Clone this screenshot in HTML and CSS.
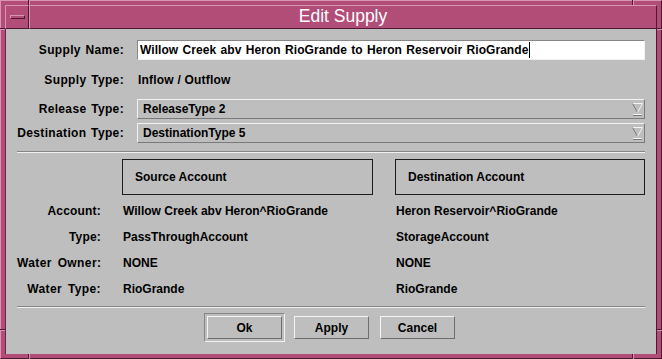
FILE: index.html
```html
<!DOCTYPE html>
<html>
<head>
<meta charset="utf-8">
<title>Edit Supply</title>
<link rel="stylesheet" href="styles.css">
</head>
<body>
<div class="frame">
  <span class="notch nv n-top-l"></span>
  <span class="notch nv n-top-r"></span>
  <span class="notch nv n-bot-l"></span>
  <span class="notch nv n-bot-r"></span>
  <span class="notch nh n-left-t"></span>
  <span class="notch nh n-left-b"></span>
  <span class="notch nh n-right-t"></span>
  <span class="notch nh n-right-b"></span>

  <div class="titlebar">
    <div class="menubtn"><span class="menubar"></span></div>
    <div class="title">Edit Supply</div>
  </div>

  <div class="content">
    <div class="form">
      <div class="lbl">Supply Name:</div>
      <div class="input">Willow Creek abv Heron RioGrande to Heron Reservoir RioGrande<span class="caret"></span></div>

      <div class="lbl">Supply Type:</div>
      <div class="val">Inflow / Outflow</div>

      <div class="lbl">Release Type:</div>
      <div class="combo">
        <span class="combo-text">ReleaseType 2</span>
        <svg class="arrow" width="11" height="15" viewBox="0 0 11 15">
          <path d="M0.5 1.5 H10.5" stroke="#f4f4f4" stroke-width="1"/>
          <path d="M0.5 1.5 L5.5 10.5" stroke="#7a7a7a" stroke-width="1" fill="none"/>
          <path d="M10.5 1.5 L5.5 10.5" stroke="#f4f4f4" stroke-width="1" fill="none"/>
          <path d="M1 12.5 H10" stroke="#f4f4f4" stroke-width="1"/>
          <path d="M1 13.5 H10" stroke="#7a7a7a" stroke-width="1"/>
        </svg>
      </div>

      <div class="lbl">Destination Type:</div>
      <div class="combo">
        <span class="combo-text">DestinationType 5</span>
        <svg class="arrow" width="11" height="15" viewBox="0 0 11 15">
          <path d="M0.5 1.5 H10.5" stroke="#f4f4f4" stroke-width="1"/>
          <path d="M0.5 1.5 L5.5 10.5" stroke="#7a7a7a" stroke-width="1" fill="none"/>
          <path d="M10.5 1.5 L5.5 10.5" stroke="#f4f4f4" stroke-width="1" fill="none"/>
          <path d="M1 12.5 H10" stroke="#f4f4f4" stroke-width="1"/>
          <path d="M1 13.5 H10" stroke="#7a7a7a" stroke-width="1"/>
        </svg>
      </div>
    </div>

    <div class="sep sep-1"></div>

    <div class="accounts">
      <div class="blank"></div>
      <div class="hdr">Source Account</div>
      <div class="hdr hdr-d">Destination Account</div>

      <div class="lbl lbl2">Account:</div>
      <div class="v">Willow Creek abv Heron^RioGrande</div>
      <div class="v vd">Heron Reservoir^RioGrande</div>

      <div class="lbl lbl2">Type:</div>
      <div class="v">PassThroughAccount</div>
      <div class="v vd">StorageAccount</div>

      <div class="lbl lbl2 wide">Water Owner:</div>
      <div class="v">NONE</div>
      <div class="v vd">NONE</div>

      <div class="lbl lbl2 wide">Water Type:</div>
      <div class="v">RioGrande</div>
      <div class="v vd">RioGrande</div>
    </div>

    <div class="sep sep-2"></div>

    <div class="buttons">
      <div class="defring"><button class="btn">Ok</button></div>
      <button class="btn">Apply</button>
      <button class="btn">Cancel</button>
    </div>
  </div>
</div>
</body>
</html>
```

FILE: styles.css
```css
* { box-sizing: border-box; }
html, body { margin: 0; padding: 0; }
body {
  font-family: "Liberation Sans", Arial, sans-serif;
  font-size: 12px;
  font-weight: bold;
  color: #000;
  background: #b24d78;
}

.frame {
  position: relative;
  width: 662px;
  height: 359px;
  background: #b24d78;
  border: 1px solid;
  border-color: #d895b3 #4e1832 #4e1832 #d895b3;
  padding: 4px;
  display: flex;
  flex-direction: column;
}

/* resize-corner notches in the frame */
.notch { position: absolute; display: block; }
.nv { width: 2px; height: 5px; border-left: 1px solid #4e1832; border-right: 1px solid #d895b3; }
.nh { width: 5px; height: 2px; border-top: 1px solid #4e1832; border-bottom: 1px solid #d895b3; }
.n-top-l { left: 27px; top: -1px; }
.n-top-r { left: 631px; top: -1px; }
.n-bot-l { left: 27px; bottom: -1px; }
.n-bot-r { left: 631px; bottom: -1px; }
.n-left-t { left: -1px; top: 27px; }
.n-left-b { left: -1px; top: 328px; }
.n-right-t { right: -1px; top: 27px; }
.n-right-b { right: -1px; top: 328px; }

.titlebar {
  display: flex;
  height: 24px;
  flex: none;
}
.menubtn {
  width: 24px;
  border: 1px solid;
  border-color: #d895b3 #4e1832 #4e1832 #d895b3;
  position: relative;
}
.menubar {
  position: absolute;
  left: 4px;
  top: 9px;
  width: 15px;
  height: 4px;
  border: 1px solid;
  border-color: #d895b3 #4e1832 #4e1832 #d895b3;
}
.title {
  flex: 1;
  border: 1px solid;
  border-color: #d895b3 #4e1832 #4e1832 #d895b3;
  color: #fff;
  font-weight: normal;
  font-size: 17.5px;
  line-height: 21px;
  text-align: center;
}

.content {
  flex: 1;
  background: #bebebe;
  border-left: 1px solid #6a2446;
  border-right: 1px solid #4e1832;
  padding: 11px 11px 0 11px;
  display: flex;
  flex-direction: column;
}

.form {
  display: grid;
  grid-template-columns: 107px 1fr;
  grid-template-rows: 20px 31px 20px 20px;
  column-gap: 13px;
  row-gap: 4px;
}
.lbl {
  text-align: right;
  align-self: center;
  white-space: nowrap;
  letter-spacing: 0.35px;
  word-spacing: 1px;
}
.lbl2 { letter-spacing: 0.2px; }
.wide { letter-spacing: 0.4px; word-spacing: 2px; }
.val { align-self: center; padding-left: 1px; letter-spacing: 0.2px; }

.input {
  background: #fff;
  border: 1px solid;
  border-color: #878787 #f2f2f2 #f2f2f2 #878787;
  padding-left: 2px;
  line-height: 18px;
  white-space: nowrap;
  overflow: hidden;
  word-spacing: 1px;
  letter-spacing: 0.05px;
}
.caret {
  display: inline-block;
  width: 1px;
  height: 16px;
  background: #000;
  vertical-align: -4px;
  margin-left: 1px;
}

.combo {
  display: flex;
  align-items: center;
  justify-content: space-between;
  border: 1px solid;
  border-color: #f2f2f2 #7a7a7a #7a7a7a #f2f2f2;
  padding: 0 1px 0 5px;
}
.combo-text { line-height: 18px; }
.arrow { display: block; margin-top: 1px; }

.sep {
  height: 2px;
  border-top: 1px solid #858585;
  border-bottom: 1px solid #f0f0f0;
  flex: none;
}
.sep-1 { margin-top: 8px; }
.sep-2 { margin-top: 4px; }

.accounts {
  margin-top: 6px;
  display: grid;
  grid-template-columns: 84px 251px 1fr;
  grid-template-rows: 39px;
  grid-auto-rows: 26px;
  column-gap: 21px;
}
.hdr-d, .vd { margin-left: 1px; }
.hdr {
  height: 36px;
  border: 1px solid #1c1c1c;
  padding-left: 12px;
  line-height: 34px;
}
.v { align-self: center; padding-left: 1px; white-space: nowrap; }
.vd { padding-left: 1px; }

.buttons {
  margin-top: 5px;
  padding-right: 3px;
  display: flex;
  justify-content: center;
  align-items: center;
  gap: 9px;
}
.defring {
  border: 1px solid;
  border-color: #858585 #f0f0f0 #f0f0f0 #858585;
  padding: 2px;
}
.btn {
  display: block;
  width: 75px;
  height: 23px;
  margin: 0;
  padding: 0;
  background: #bebebe;
  border: 1px solid;
  border-color: #f4f4f4 #6e6e6e #6e6e6e #f4f4f4;
  font-family: "Liberation Sans", Arial, sans-serif;
  font-size: 12px;
  font-weight: bold;
  color: #000;
  text-align: center;
}
.defring + .btn + .btn { margin-left: 2px; }
```
